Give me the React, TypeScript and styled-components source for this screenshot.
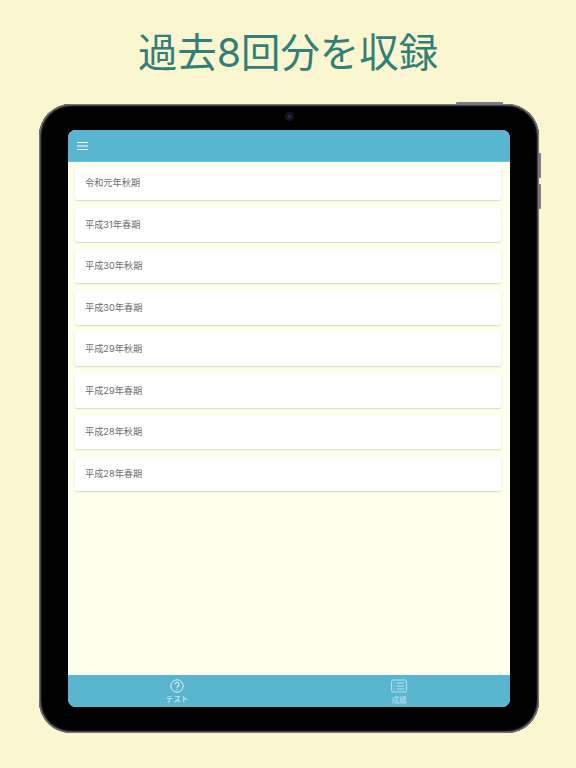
import React from "react";
import styled, { createGlobalStyle } from "styled-components";

const Global = createGlobalStyle`
  html, body { margin: 0; padding: 0; background: #f9f6d0; }
  body { font-family: "Inter", "Noto Sans CJK JP", sans-serif; }
`;

const Page = styled.div`
  width: 576px;
  height: 768px;
  overflow: hidden;
  background: #f9f6d0;
  display: flex;
  flex-direction: column;
  align-items: center;
`;

const Title = styled.h1`
  margin: 0;
  height: 104px;
  padding-top: 26px;
  box-sizing: border-box;
  font-size: 39.4px;
  line-height: 54px;
  font-weight: 400;
  color: #337f78;
  white-space: nowrap;
`;

const Device = styled.div`
  position: relative;
  width: 500px;
  height: 629px;
  margin-left: 2px;
  box-sizing: border-box;
  padding: 26px 29px;
  background: #000;
  border-radius: 32px;
  box-shadow: inset 0 0 0 1px #77767e, inset 0 0 1.5px 2px #55555c;
`;

const HardwareTop = styled.span`
  position: absolute;
  top: -2px;
  right: 36px;
  width: 47px;
  height: 2px;
  background: #7d7c82;
  border-radius: 1px 1px 0 0;
`;

const HardwareSide = styled.span<{ $top: number }>`
  position: absolute;
  top: ${(p) => p.$top}px;
  right: -2px;
  width: 2px;
  height: 25px;
  background: #7d7c82;
  border-radius: 0 1px 1px 0;
`;

const Camera = styled.span`
  position: absolute;
  top: 7.5px;
  left: 245.5px;
  width: 9px;
  height: 9px;
  border-radius: 50%;
  background: radial-gradient(circle, #1c2a6a 0 1.2px, #14141c 1.8px 100%);
`;

const Screen = styled.div`
  width: 442px;
  height: 577px;
  border-radius: 8px;
  overflow: hidden;
  background: #fefeec;
  display: flex;
  flex-direction: column;
`;

const Header = styled.header`
  flex: none;
  height: 32px;
  box-sizing: border-box;
  background: #58b6d1;
  border-bottom: 1px solid #66c3dc;
  display: flex;
  align-items: center;
  padding: 0 9px;
`;

const List = styled.main`
  flex: 1;
  display: flex;
  flex-direction: column;
  gap: 7.57px;
  padding: 4px 9px 0 7px;
`;

const Card = styled.div`
  height: 34px;
  flex: none;
  box-sizing: border-box;
  background: #fff;
  border-radius: 2px;
  box-shadow: 0 1px 1.5px rgba(120, 120, 90, 0.28);
  padding: 0 0 2px 10px;
  display: flex;
  align-items: center;
  font-size: 9.2px;
  color: #6e6e6e;
`;

const TabBar = styled.nav`
  flex: none;
  height: 32px;
  background: #58b6d1;
  display: grid;
  grid-template-columns: 218px 1fr;
`;

const Tab = styled.div<{ $dim?: boolean }>`
  display: flex;
  flex-direction: column;
  align-items: center;
  padding-top: 4px;
  color: #fff;
  opacity: ${(p) => (p.$dim ? 0.62 : 0.85)};
  font-size: 7.6px;
  line-height: 9px;
`;

const ScoreTab = styled(Tab)`
  padding-left: 2px;
`;

const TabIcon = styled.svg<{ $gap: number }>`
  display: block;
  height: 14px;
  margin-bottom: ${(p) => p.$gap}px;
`;

const items = [
  "令和元年秋期",
  "平成31年春期",
  "平成30年秋期",
  "平成30年春期",
  "平成29年秋期",
  "平成29年春期",
  "平成28年秋期",
  "平成28年春期",
];

export default function App() {
  return (
    <Page>
      <Global />
      <Title>過去8回分を収録</Title>
      <Device>
        <HardwareTop />
        <HardwareSide $top={49} />
        <HardwareSide $top={80} />
        <Camera />
        <Screen>
          <Header>
            <svg width="11" height="8" viewBox="0 0 11 8" fill="none" stroke="#fff" strokeWidth="1">
              <path d="M0 .5h11M0 4h11M0 7.5h11" />
            </svg>
          </Header>
          <List>
            {items.map((t) => (
              <Card key={t}>{t}</Card>
            ))}
          </List>
          <TabBar>
            <Tab>
              <TabIcon $gap={1.5} width="14" viewBox="0 0 14 14" fill="none" stroke="#fff">
                <circle cx="7" cy="7" r="6.2" strokeWidth="1" />
                <path d="M5 5.4a2 2 0 1 1 3.2 1.6c-.8.6-1.2 1-1.2 1.8" strokeWidth="1.1" />
                <circle cx="7" cy="10.4" r=".6" fill="#fff" stroke="none" />
              </TabIcon>
              テスト
            </Tab>
            <ScoreTab $dim>
              <TabIcon $gap={2.5} width="16" viewBox="0 0 16 14" fill="none" stroke="#fff">
                <rect x=".6" y="1" width="14.8" height="12" rx="1.5" strokeWidth="1" />
                <path d="M5.5 4h7.5M5.5 7h7.5M5.5 10h7.5" strokeWidth="1" />
                <path d="M2.8 4h1M2.8 7h1M2.8 10h1" strokeWidth="1.2" />
              </TabIcon>
              成績
            </ScoreTab>
          </TabBar>
        </Screen>
      </Device>
    </Page>
  );
}
